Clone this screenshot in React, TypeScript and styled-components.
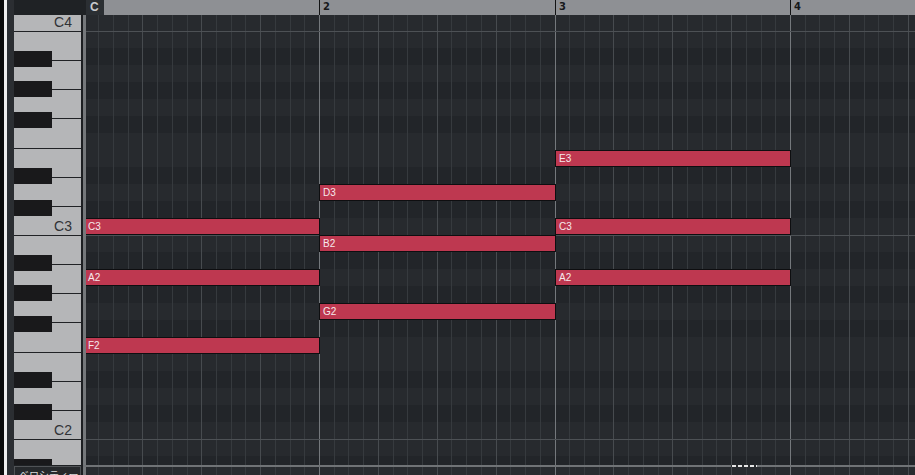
import React from "react";
import styled, { createGlobalStyle } from "styled-components";

// Piano-roll geometry (pixels)
const ROW = 17; // one semitone
const BAR = 235.5; // one 4/4 bar
const BAR_ORIGIN = -2.5; // bar 1 starts just left of the visible grid
const STEP = BAR / 16; // sixteenth note
const GRID_W = 829;
const GRID_H = 450;
const LANE_H = 8;

const BLACK_ROWS = new Set([2, 4, 6, 9, 11]); // semitones below C that are black keys

const barX = (k: number) => Math.round(BAR_ORIGIN + k * BAR);

type Note = { name: string; row: number; bar: number; len: number };

// rows count downward from C4
const NOTES: Note[] = [
  { name: "C3", row: 12, bar: 0, len: 1 },
  { name: "A2", row: 15, bar: 0, len: 1 },
  { name: "F2", row: 19, bar: 0, len: 1 },
  { name: "D3", row: 10, bar: 1, len: 1 },
  { name: "B2", row: 13, bar: 1, len: 1 },
  { name: "G2", row: 17, bar: 1, len: 1 },
  { name: "E3", row: 8, bar: 2, len: 1 },
  { name: "C3", row: 12, bar: 2, len: 1 },
  { name: "A2", row: 15, bar: 2, len: 1 },
];

const OCTAVES = ["C4", "C3", "C2", "C1"];
const WHITE_KEYS = ["B", "A", "G", "F", "E", "D", "C"];
const BLACK_KEY_TOPS = [19, 49, 80, 136, 168];

const GlobalStyle = createGlobalStyle`
  html, body {
    margin: 0;
    padding: 0;
    background: #1e2124;
    overflow: hidden;
  }
  #root {
    width: 915px;
    height: 475px;
  }
`;

const Editor = styled.div`
  display: grid;
  grid-template-columns: 14px 67px 2px 3px 1fr;
  grid-template-rows: 15px ${GRID_H}px 2px 1fr;
  width: 915px;
  height: 475px;
  background: #1e2124;
  font-family: "Liberation Sans", Arial, sans-serif;
  overflow: hidden;
`;

const EdgeStrip = styled.div`
  grid-row: 1 / -1;
  grid-column: 1;
  background: linear-gradient(
    to right,
    #0b0b0b 0 4px,
    #eeeeee 4px 7px,
    #2b2e32 7px
  );
`;

const KeysCorner = styled.div`
  grid-row: 1;
  grid-column: 2 / 5;
  background: #1f2225;
`;

const Ruler = styled.div`
  grid-row: 1;
  grid-column: 5;
  display: flex;
`;

const ChordCell = styled.div`
  width: 18px;
  flex: none;
  background: #2b2f33;
  color: #c9cbcd;
  font-size: 12px;
  font-weight: bold;
  line-height: 15px;
  padding-left: 4px;
  box-sizing: border-box;
`;

const RulerStrip = styled.div`
  position: relative;
  flex: 1;
  background: #8e9094;
`;

const BarMark = styled.div`
  position: absolute;
  top: 0;
  bottom: 0;
  border-left: 1px solid #121314;
  padding-left: 3px;
  font-family: "DejaVu Sans", sans-serif;
  font-size: 10px;
  font-weight: bold;
  line-height: 14px;
  color: #17181a;
`;

const Keyboard = styled.div`
  grid-row: 2;
  grid-column: 2;
  overflow: hidden;
  background: #b5b6b8;
`;

const KeyStack = styled.div`
  display: flex;
  flex-direction: column;
  margin-top: -187px;
`;

const Octave = styled.div`
  position: relative;
  flex: none;
  height: 204px;
  display: flex;
  flex-direction: column;
`;

const WhiteKey = styled.div`
  flex: 1;
  box-sizing: border-box;
  border-bottom: 1px solid #202225;
  display: flex;
  align-items: flex-end;
  justify-content: flex-end;
  padding: 0 9px 1px 0;
  font-size: 14px;
  line-height: 16px;
  color: #303236;
`;

const BlackKey = styled.div<{ $top: number }>`
  position: absolute;
  left: 0;
  top: ${(p) => p.$top}px;
  width: 38px;
  height: 16px;
  background: #19191b;
`;

const KeyEdge = styled.div`
  grid-row: 2 / -1;
  grid-column: 3;
  background: #1d1f22;
`;

const Splitter = styled.div`
  grid-row: 2 / -1;
  grid-column: 4;
  background: #75787b;
`;

const NoteGrid = styled.div`
  grid-row: 2;
  grid-column: 5;
  position: relative;
  overflow: hidden;
  background: #26292d;
`;

const Drawing = styled.svg`
  position: absolute;
  left: 0;
  top: 0;
  display: block;
`;

const NoteBlock = styled.div<{ $left: number; $top: number; $width: number }>`
  position: absolute;
  left: ${(p) => p.$left}px;
  top: ${(p) => p.$top}px;
  width: ${(p) => p.$width}px;
  height: ${ROW}px;
  box-sizing: border-box;
  border: 1px solid #0e0e10;
  background: #be3850;
  color: #f6e9ec;
  font-size: 10px;
  line-height: 15px;
  padding-left: 3px;
  white-space: nowrap;
  overflow: hidden;
`;

const LaneSplit = styled.div`
  grid-row: 3;
  grid-column: 4 / 6;
  display: flex;
  background: #707376;
`;

const SplitHandle = styled.div`
  margin-left: 648px;
  width: 26px;
  height: 2px;
  background: repeating-linear-gradient(
    to right,
    #2a2d30 0 1px,
    #e6e6e6 1px 5px,
    #2a2d30 5px 6px
  );
`;

const VelocityLabel = styled.div`
  grid-row: 3 / -1;
  grid-column: 2;
  margin-top: 1px;
  box-sizing: border-box;
  border: 1px solid #505356;
  border-bottom: none;
  background: #26292c;
  color: #d8d9da;
  font-family: "Noto Sans CJK JP", sans-serif;
  font-size: 10px;
  line-height: 14px;
  padding: 1px 0 0 4px;
  overflow: hidden;
  white-space: nowrap;
`;

const VelocityLane = styled.div`
  grid-row: 4;
  grid-column: 5;
  position: relative;
  overflow: hidden;
  background: #282b2f;
`;

function lineColor(i: number) {
  if (i % 16 === 0) return "#74787c";
  if (i % 4 === 0) return "#474b4f";
  return "#363a3e";
}

function VerticalLines({ height }: { height: number }) {
  const lines: React.ReactNode[] = [];
  for (let i = 0; i <= 16 * 4; i++) {
    const x = Math.round(BAR_ORIGIN + i * STEP);
    if (x < 0 || x >= GRID_W) continue;
    lines.push(
      <rect key={i} x={x} y={0} width={1} height={height} fill={lineColor(i)} />
    );
  }
  return <>{lines}</>;
}

function RollBackground() {
  const rows: React.ReactNode[] = [];
  for (let n = 0; n < 28; n++) {
    const y = ROW * n - 1;
    const black = BLACK_ROWS.has(n % 12);
    rows.push(
      <rect
        key={`r${n}`}
        x={0}
        y={y}
        width={GRID_W}
        height={ROW}
        fill={black ? "#222529" : "#272a2e"}
      />
    );
  }
  const octaveLines: React.ReactNode[] = [];
  for (let n = 1; n < 28; n += 12) {
    octaveLines.push(
      <rect key={`o${n}`} x={0} y={ROW * n - 1} width={GRID_W} height={1} fill="#4d5155" />
    );
  }
  return (
    <Drawing width={GRID_W} height={GRID_H} shapeRendering="crispEdges">
      {rows}
      <VerticalLines height={GRID_H} />
      {octaveLines}
    </Drawing>
  );
}

export default function App() {
  return (
    <>
      <GlobalStyle />
      <Editor>
        <EdgeStrip />
        <KeysCorner />
        <Ruler>
          <ChordCell>C</ChordCell>
          <RulerStrip>
            {[1, 2, 3].map((k) => (
              <BarMark key={k} style={{ left: barX(k) - 18 }}>
                {k + 1}
              </BarMark>
            ))}
          </RulerStrip>
        </Ruler>

        <Keyboard>
          <KeyStack>
            {OCTAVES.map((label) => (
              <Octave key={label}>
                {WHITE_KEYS.map((k) => (
                  <WhiteKey key={k}>{k === "C" ? label : null}</WhiteKey>
                ))}
                {BLACK_KEY_TOPS.map((t) => (
                  <BlackKey key={t} $top={t} />
                ))}
              </Octave>
            ))}
          </KeyStack>
        </Keyboard>
        <KeyEdge />
        <Splitter />

        <NoteGrid>
          <RollBackground />
          {NOTES.map((n, i) => {
            const left = barX(n.bar);
            const width = barX(n.bar + n.len) - left + 1;
            return (
              <NoteBlock key={i} $left={left} $top={ROW * n.row - 1} $width={width}>
                {n.name}
              </NoteBlock>
            );
          })}
        </NoteGrid>

        <LaneSplit>
          <SplitHandle />
        </LaneSplit>
        <VelocityLabel>ベロシティー</VelocityLabel>
        <VelocityLane>
          <Drawing width={GRID_W} height={LANE_H} shapeRendering="crispEdges">
            <VerticalLines height={LANE_H} />
          </Drawing>
        </VelocityLane>
      </Editor>
    </>
  );
}
